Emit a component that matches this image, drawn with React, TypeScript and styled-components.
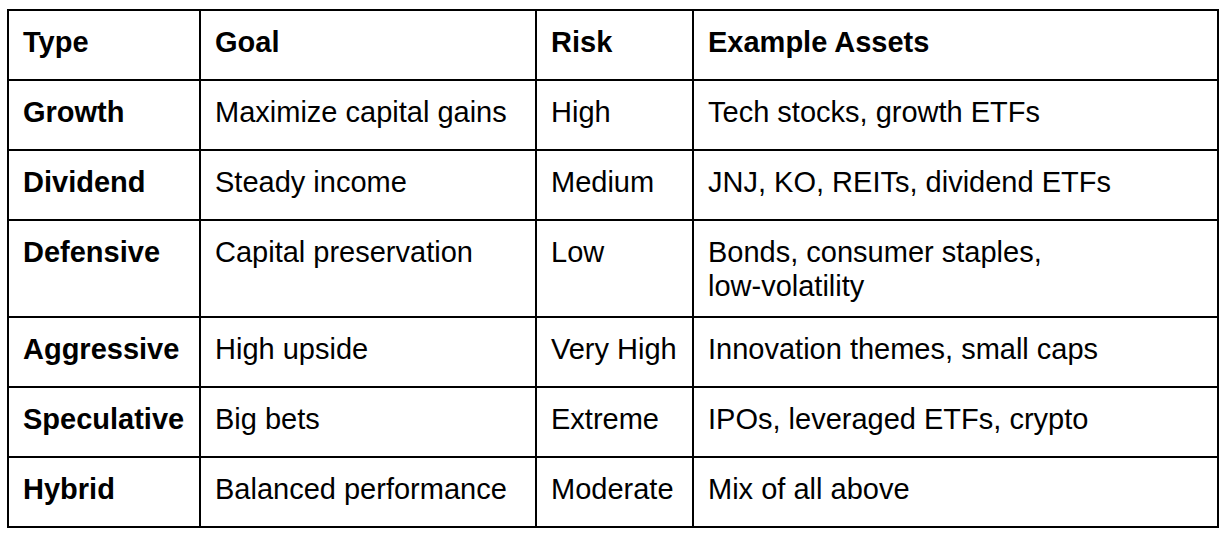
import React from "react";
import styled, { createGlobalStyle } from "styled-components";

const GlobalStyle = createGlobalStyle`
  html, body {
    margin: 0;
    padding: 0;
    background: #ffffff;
  }
  body {
    font-family: "Liberation Sans", Arial, Helvetica, sans-serif;
    color: #000000;
  }
`;

const Page = styled.div`
  padding: 9px 0 0 7px;
`;

const Table = styled.table`
  border-collapse: separate;
  border-spacing: 0;
  border-left: 2px solid #000;
  border-top: 2px solid #000;
  table-layout: fixed;
  width: 1210px;
  font-size: 29px;
  line-height: 33.5px;
`;

const Cell = styled.td<{ $bold?: boolean; $padRight?: number }>`
  box-sizing: content-box;
  height: 40px;
  padding: 15px ${(p) => p.$padRight ?? 10}px 13px 14px;
  border-right: 2px solid #000;
  border-bottom: 2px solid #000;
  vertical-align: top;
  font-weight: ${(p) => (p.$bold ? 700 : 400)};
  text-align: left;
`;

const HeadCell = styled(Cell).attrs({ as: "th" })``;

const NoWrap = styled.span`
  white-space: nowrap;
`;

const rows = [
  ["Growth", "Maximize capital gains", "High", "Tech stocks, growth ETFs"],
  ["Dividend", "Steady income", "Medium", "JNJ, KO, REITs, dividend ETFs"],
  ["Defensive", "Capital preservation", "Low", "Bonds, consumer staples, low-volatility"],
  ["Aggressive", "High upside", "Very High", "Innovation themes, small caps"],
  ["Speculative", "Big bets", "Extreme", "IPOs, leveraged ETFs, crypto"],
  ["Hybrid", "Balanced performance", "Moderate", "Mix of all above"],
];

const widths = [192, 336, 157, 525];

function Words({ text }: { text: string }) {
  const parts = text.split(" ");
  return (
    <>
      {parts.map((w, i) => (
        <React.Fragment key={i}>
          {i > 0 ? " " : null}
          {w.includes("-") ? <NoWrap>{w}</NoWrap> : w}
        </React.Fragment>
      ))}
    </>
  );
}

export default function App() {
  return (
    <>
      <GlobalStyle />
      <Page>
        <Table>
          <colgroup>
            {widths.map((w, i) => (
              <col key={i} style={{ width: w }} />
            ))}
          </colgroup>
          <thead>
            <tr>
              {["Type", "Goal", "Risk", "Example Assets"].map((h) => (
                <HeadCell key={h} $bold>
                  {h}
                </HeadCell>
              ))}
            </tr>
          </thead>
          <tbody>
            {rows.map((r) => (
              <tr key={r[0]}>
                <Cell $bold>{r[0]}</Cell>
                <Cell>{r[1]}</Cell>
                <Cell>{r[2]}</Cell>
                <Cell $padRight={40}>
                  <Words text={r[3]} />
                </Cell>
              </tr>
            ))}
          </tbody>
        </Table>
      </Page>
    </>
  );
}
